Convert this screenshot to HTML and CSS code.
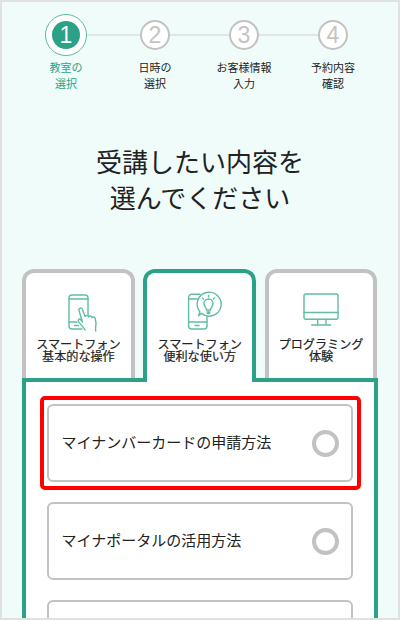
FILE: index.html
```html
<!DOCTYPE html>
<html lang="ja">
<head>
    <meta charset="UTF-8">
    <title>教室の選択</title>
    <link rel="stylesheet" href="styles.css">
</head>
<body>
    <div class="page">
        <ol class="steps">
            <li class="step current">
                <span class="step-num"><span>1</span></span>
                <span class="step-label">教室の<br>選択</span>
            </li>
            <li class="step">
                <span class="step-num"><span>2</span></span>
                <span class="step-label">日時の<br>選択</span>
            </li>
            <li class="step">
                <span class="step-num"><span>3</span></span>
                <span class="step-label">お客様情報<br>入力</span>
            </li>
            <li class="step">
                <span class="step-num"><span>4</span></span>
                <span class="step-label">予約内容<br>確認</span>
            </li>
        </ol>

        <h1>受講したい内容を<br>選んでください</h1>

        <div class="tabs">
            <div class="tab">
                <svg class="tab-icon" viewBox="0 0 40 40" width="40" height="40" fill="none" stroke="#5fbda5" stroke-width="1.4" stroke-linecap="round" stroke-linejoin="round">
                    <path d="M24 37H14a3 3 0 0 1-3-3V6a3 3 0 0 1 3-3h13a3 3 0 0 1 3 3v18"/>
                    <path d="M11 7h19M11 30h8M16.500 33.500h4"/>
                    <path fill="#fff" d="M27 38c-1-3-4.500-5-6.500-8.500-1-2 1-3.500 2.500-1.500l1.500 2-3.500-11.500c-.6-2.500 2.800-3.500 3.500-1l2.500 7c.5-1.500 3-1.500 3.500.3.700-1.300 3-1.200 3.500.7.800-1 2.700-.7 3.200 1 1 3.500 1 6 .5 8-.3 1.500-.3 2.500 0 4.500"/>
                </svg>
                <span class="tab-text">スマートフォン<br>基本的な操作</span>
            </div>
            <div class="tab active">
                <svg class="tab-icon" viewBox="0 0 40 40" width="40" height="40" fill="none" stroke="#5fbda5" stroke-width="1.4" stroke-linecap="round" stroke-linejoin="round">
                    <path d="M20 2.300h-8.400a3 3 0 0 0-3 3v28.700a3 3 0 0 0 3 3h12.400a3 3 0 0 0 3-3v-10"/>
                    <path d="M8.600 7h9M8.600 30h18.400M15 33.500h4"/>
                    <path fill="#fff" d="M21.500 21.400l-2.900 2.300 1.300-3.900a12 12 0 1 1 1.600 1.600z"/>
                    <path d="M26.500 18c0-2.500-2.500-3.500-2.500-6.500a4.500 4.500 0 0 1 9 0c0 3-2.500 4-2.500 6.500zM27 20h3M27.500 21.500h2"/>
                    <path d="M28.500 3.500v1.500M22.500 6l1 1M34.500 6l-1 1"/>
                </svg>
                <span class="tab-text">スマートフォン<br>便利な使い方</span>
            </div>
            <div class="tab">
                <svg class="tab-icon" viewBox="0 0 40 40" width="40" height="40" fill="none" stroke="#5fbda5" stroke-width="1.4" stroke-linecap="round" stroke-linejoin="round">
                    <rect x="3" y="2" width="34" height="25.300" rx="2"/>
                    <path d="M3 20.500h34M16.700 27.300v5.700M25 27.300v5.700M10.700 33h19"/>
                </svg>
                <span class="tab-text">プログラミング<br>体験</span>
            </div>
        </div>

        <div class="panel">
            <div class="option marked">
                <span class="option-text">マイナンバーカードの申請方法</span>
                <i class="radio"></i>
            </div>
            <div class="option">
                <span class="option-text">マイナポータルの活用方法</span>
                <i class="radio"></i>
            </div>
            <div class="option"></div>
        </div>
    </div>
</body>
</html>
```

FILE: styles.css
```css
* {
    box-sizing: border-box;
}
html, body {
    margin: 0;
    height: 620px;
    overflow: hidden;
}
body {
    font-family: "Liberation Sans", "Noto Sans CJK JP", sans-serif;
    color: #222;
}
.page {
    height: 620px;
    border: 2px solid #e0e2e2;
    background-color: #f0fcf9;
    overflow: hidden;
}

/* steps */
.steps {
    list-style: none;
    margin: 0;
    padding: 0 0 0 19.500px;
    display: flex;
    height: 111px;
}
.step {
    width: 89px;
    display: flex;
    flex-direction: column;
    align-items: center;
    position: relative;
}
.step::before { /* line to the next step */
    content: "";
    position: absolute;
    top: 32px;
    left: 44px;
    width: 89px;
    height: 2px;
    background-color: #dfe6e4;
}
.step:last-child::before {
    display: none;
}
.step-num {
    position: relative;
    width: 42px;
    height: 42px;
    margin-top: 12px;
    border-radius: 50%;
    display: flex;
    align-items: center;
    justify-content: center;
}
.step-num span {
    width: 30px;
    height: 30px;
    border-radius: 50%;
    border: 2px solid #c2c2c2;
    background-color: #fff;
    color: #c4c4c4;
    font-size: 23px;
    line-height: 26px;
    text-align: center;
}
.step-label {
    margin-top: 4px;
    font-size: 11px;
    line-height: 16px;
    text-align: center;
    white-space: nowrap;
}
.current .step-num {
    border: 1px solid #5fb9a2;
    background-color: #fff;
}
.current .step-num span {
    width: 28px;
    height: 28px;
    border: none;
    background-color: #2ba287;
    color: #fff;
    line-height: 28px;
}
.current .step-label {
    color: #2ba287;
}

/* heading */
h1 {
    margin: 32px 0 0;
    font-size: 26px;
    font-weight: normal;
    line-height: 36px;
    text-align: center;
}

/* tabs */
.tabs {
    display: flex;
    gap: 8.500px;
    margin: 52px 0 0 20px;
    width: 356px;
    align-items: flex-end;
}
.tab {
    width: 112.800px;
    height: 109px;
    border: 4px solid #c2c2c2;
    border-bottom: none;
    border-radius: 12px 12px 0 0;
    background-color: #fff;
    display: flex;
    flex-direction: column;
    align-items: center;
    padding-top: 19px;
}
.tab.active {
    height: 113px;
    border-color: #2ba287;
    position: relative;
    z-index: 1;
    margin-bottom: -4px;
}
.tab-icon {
    flex: none;
    overflow: visible;
}
.tab-text {
    margin-top: 8px;
    font-size: 12.100px;
    line-height: 11.500px;
    text-align: center;
    white-space: nowrap;
    -webkit-text-stroke: 0.2px #222;
}

/* panel */
.panel {
    margin-left: 20px;
    width: 355.500px;
    height: 300px;
    border: 4px solid #2ba287;
    border-bottom: none;
    background-color: #fff;
    padding: 22px 21px 0;
    display: flex;
    flex-direction: column;
    gap: 20px;
}
.option {
    flex: none;
    height: 78px;
    border: 2px solid #c2c2c2;
    border-radius: 6px;
    background-color: #fff;
    padding: 0 11.500px 0 12.500px;
    display: flex;
    align-items: center;
    justify-content: space-between;
    font-size: 15px;
    position: relative;
}
.option-text {
    margin-bottom: 3px;
}
.option.marked::after { /* red mark over the first choice */
    content: "";
    position: absolute;
    top: -10px;
    left: -9px;
    right: -10px;
    bottom: -10px;
    border: 4px solid #f00;
    border-radius: 5px;
}
.radio {
    width: 27px;
    height: 27px;
    border: 4px solid #c2c2c2;
    border-radius: 50%;
}
```
